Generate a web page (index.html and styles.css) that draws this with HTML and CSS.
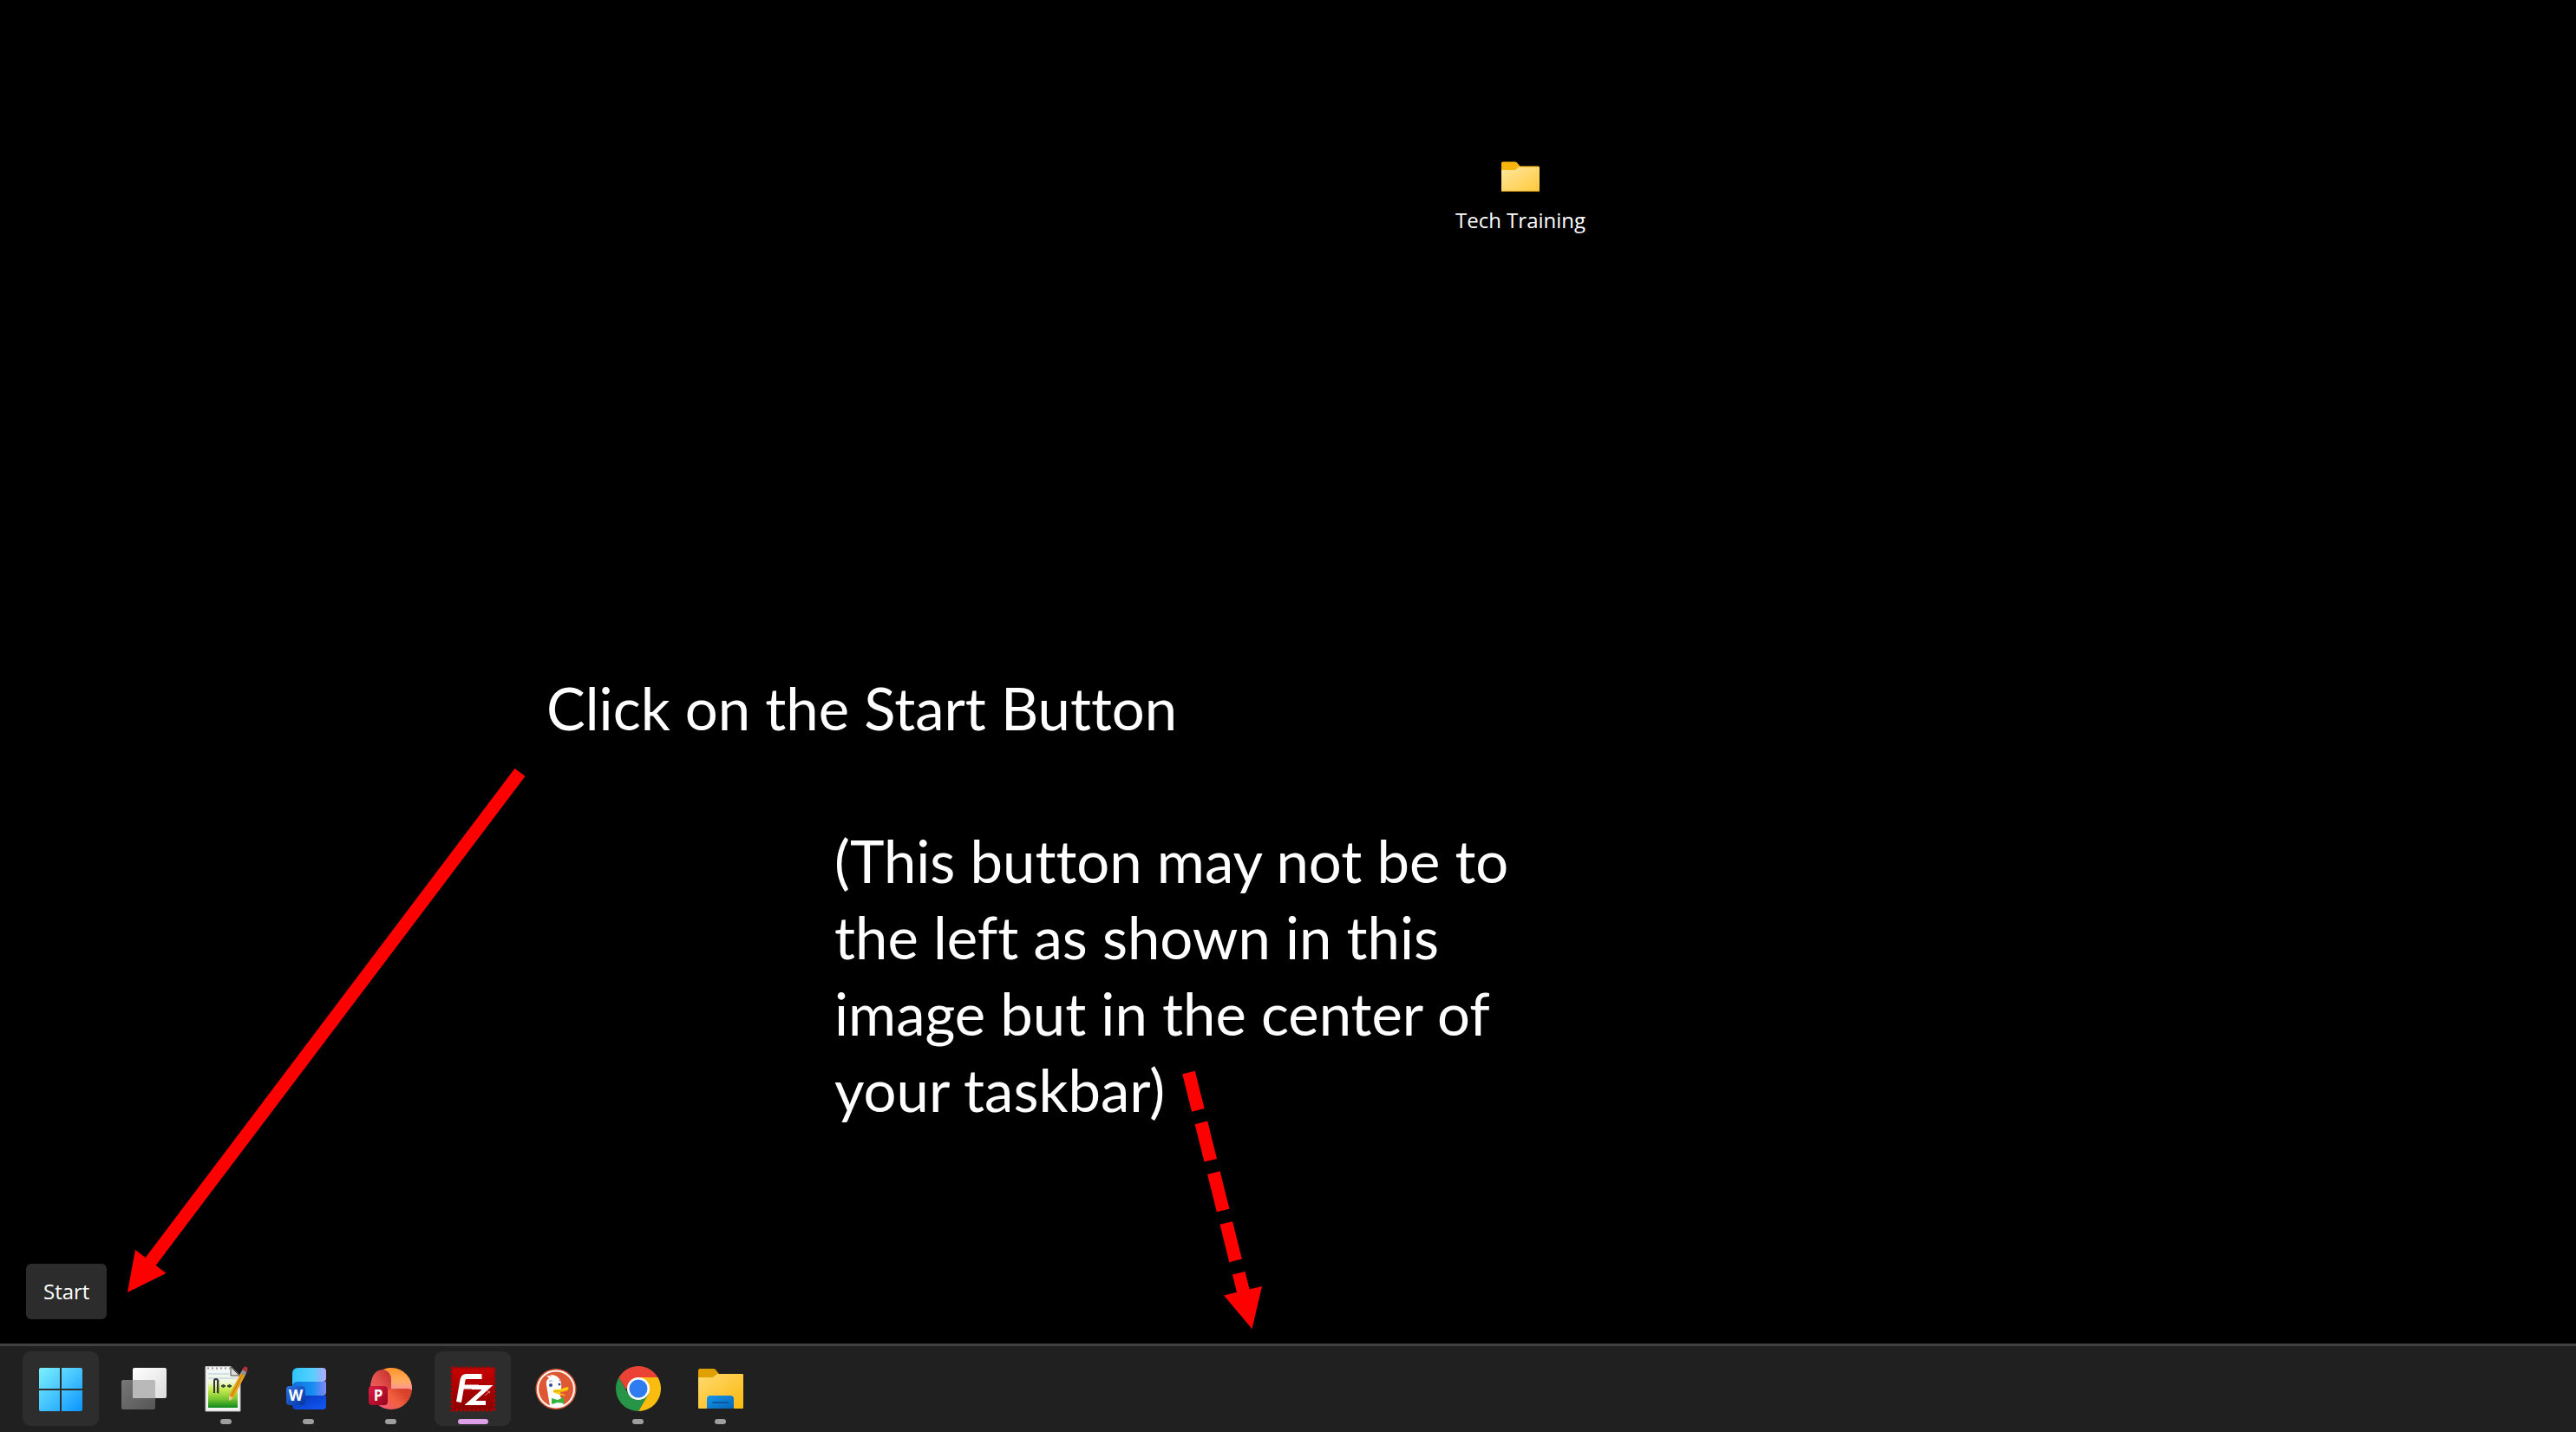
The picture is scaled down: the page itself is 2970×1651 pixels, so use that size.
FILE: index.html
```html
<!DOCTYPE html>
<html lang="en">
<head>
  <meta charset="UTF-8" />
  <title>Start Button</title>
  <link rel="stylesheet" href="styles.css">
</head>
<body>

  <!-- Desktop -->
  <main class="desktop">
    <button class="shortcut" type="button">
      <svg class="shortcut-icon" viewBox="0 0 46 36" aria-hidden="true">
        <defs>
          <linearGradient id="folderFront" x1="0" y1="0" x2="1" y2="1">
            <stop offset="0" stop-color="#ffe8a0" />
            <stop offset="1" stop-color="#ffc83a" />
          </linearGradient>
        </defs>
        <path d="M1 2q0-1.500 1.500-1.500h14q1.500 0 2.500 1l3.500 4h21q1.500 0 1.500 1.500v20H1z" fill="#f9b50e" />
        <path d="M1 10h16l4-3.500h22.500q1.500 0 1.500 1.500v25.500q0 1.500-1.500 1.500h-41Q1 35 1 33.500z" fill="url(#folderFront)" />
        <path d="M1.500 34.500h43" stroke="#c99016" />
      </svg>
      <span>Tech Training</span>
    </button>

    <p class="note note-start">Click on the Start Button</p>
    <p class="note note-center">(This button may not be to<br>
      the left as shown in this<br>
      image but in the center of<br>
      your taskbar)</p>

    <!-- Arrows -->
    <svg class="arrows" aria-hidden="true">
      <path class="shaft" d="M599.500 890.500L171 1458" />
      <path class="head" d="M147 1490l9-49 35.500 27z" />
      <path class="shaft dashed" d="M1370.500 1236.500L1434 1491" />
      <path class="head" d="M1443.500 1532l-32.500-38.500 44-10.500z" />
    </svg>

    <div class="tooltip" id="startTip" role="tooltip">Start</div>
  </main>

  <!-- Taskbar -->
  <nav class="taskbar" aria-label="Taskbar">
    <button class="task active" type="button" aria-label="Start" aria-describedby="startTip">
      <svg viewBox="0 0 52 52">
        <defs>
          <linearGradient id="win" gradientUnits="userSpaceOnUse" x1="1" y1="2" x2="51" y2="52">
            <stop offset="0" stop-color="#7cf0ff" />
            <stop offset=".5" stop-color="#46c4ff" />
            <stop offset="1" stop-color="#0a94ff" />
          </linearGradient>
        </defs>
        <g fill="url(#win)">
          <path d="M3 2h22v24H1V4q0-2 2-2z" />
          <path d="M27 2h22q2 0 2 2v22H27z" />
          <path d="M1 28h24v24H3q-2 0-2-2z" />
          <path d="M27 28h24v22q0 2-2 2H27z" />
        </g>
      </svg>
    </button>

    <button class="task" type="button" aria-label="Task View">
      <svg viewBox="0 0 52 52">
        <defs>
          <linearGradient id="pane" x1="0" y1="0" x2="1" y2="1">
            <stop offset="0" stop-color="#fff" />
            <stop offset="1" stop-color="#dcdcdc" />
          </linearGradient>
          <linearGradient id="paneDark" x1="0" y1="0" x2="1" y2="1">
            <stop offset="0" stop-color="#777" />
            <stop offset="1" stop-color="#565656" />
          </linearGradient>
        </defs>
        <rect x="1" y="16" width="39" height="34" rx="2" fill="url(#paneDark)" />
        <rect x="14" y="2" width="39" height="35" rx="2" fill="url(#pane)" />
        <path d="M14 16h24q2 0 2 2v19H16q-2 0-2-2z" fill="#b9b9b9" />
      </svg>
    </button>

    <button class="task" type="button" aria-label="Notepad++">
      <svg viewBox="0 0 52 52">
        <defs>
          <linearGradient id="npp" x1="0" y1="0" x2="0" y2="1">
            <stop offset="0" stop-color="#f2f7f8" />
            <stop offset=".3" stop-color="#f0f8d8" />
            <stop offset=".5" stop-color="#c8ec50" />
            <stop offset=".75" stop-color="#7cc832" />
            <stop offset="1" stop-color="#0c8a1c" />
          </linearGradient>
        </defs>
        <path d="M3 .500h29l11 11V52H3z" fill="#f4f4f4" stroke="#bbb" />
        <path d="M6 6h25l9 8v34H6z" fill="url(#npp)" />
        <path d="M6 9h24M6 14h33" stroke="#d3dfe6" stroke-width="2" />
        <path d="M5 2.500h26" stroke="#999" stroke-width="2" stroke-dasharray="2 3" />
        <path d="M32 1v10h10z" fill="#ddd" stroke="#444" />
        <path d="M13 31V17q0-2 2-2t2 2v14" fill="none" stroke="#333" stroke-width="2" />
        <path d="M18 16v16" stroke="#555" />
        <path d="M21 23h5M23.500 21v4M28 23h5M30.500 21v4" stroke="#3c4a2c" stroke-width="2" />
        <path d="M30 40l0-6 14-27 5 3-14 27z" fill="#e9a21b" />
        <path d="M32.500 35L46 9" stroke="#b87508" />
        <path d="M30 40v-6l5 3z" fill="#eec89a" />
        <path d="M43.500 8l2-4 5 3-2 4z" fill="#8c96a2" />
        <path d="M45.500 4q2-5 5-3 2 2 0 6z" fill="#b5323a" />
      </svg>
      <span class="running"></span>
    </button>

    <button class="task" type="button" aria-label="Word">
      <svg viewBox="0 0 52 52">
        <defs>
          <linearGradient id="wordTop" x1="0" y1="0" x2="1" y2="0">
            <stop offset="0" stop-color="#30c5ff" />
            <stop offset=".6" stop-color="#55d0fd" />
            <stop offset="1" stop-color="#b4a9fb" />
          </linearGradient>
          <linearGradient id="wordMid" x1="0" y1="0" x2="1" y2="0">
            <stop offset="0" stop-color="#0f70dc" />
            <stop offset=".6" stop-color="#168df0" />
            <stop offset="1" stop-color="#8388f5" />
          </linearGradient>
          <linearGradient id="wordLow" x1="0" y1="0" x2="1" y2="1">
            <stop offset="0" stop-color="#0736b4" />
            <stop offset="1" stop-color="#1259fa" />
          </linearGradient>
          <linearGradient id="wordBadge" x1="0" y1="0" x2="1" y2="1">
            <stop offset="0" stop-color="#2b72e4" />
            <stop offset="1" stop-color="#07349d" />
          </linearGradient>
        </defs>
        <path d="M8 34h39v12q0 4-4 4H13q-5 0-5-5z" fill="url(#wordLow)" />
        <path d="M8 18h39v12q0 4-4 4H14q-6 0-6 6z" fill="url(#wordMid)" />
        <path d="M8 9q0-7 7-7h28q4 0 4 4v8q0 4-4 4H14q-6 0-6 6z" fill="url(#wordTop)" />
        <rect x="1" y="23" width="22" height="22" rx="4" fill="url(#wordBadge)" />
        <text class="badge-letter" x="12" y="40">W</text>
      </svg>
      <span class="running"></span>
    </button>

    <button class="task" type="button" aria-label="PowerPoint">
      <svg viewBox="0 0 52 52">
        <defs>
          <linearGradient id="pptRight" x1="0" y1="0" x2="0" y2="1">
            <stop offset="0" stop-color="#ff962a" />
            <stop offset=".6" stop-color="#ffab60" />
            <stop offset="1" stop-color="#ff8f9c" />
          </linearGradient>
          <linearGradient id="pptLeft" x1="1" y1="0" x2="0" y2="1">
            <stop offset="0" stop-color="#bf2b2e" />
            <stop offset=".5" stop-color="#e4534b" />
            <stop offset="1" stop-color="#f45f78" />
          </linearGradient>
          <linearGradient id="pptLow" x1="1" y1="0" x2="0" y2="1">
            <stop offset="0" stop-color="#c93728" />
            <stop offset=".4" stop-color="#d8432c" />
            <stop offset=".6" stop-color="#f2613e" />
            <stop offset="1" stop-color="#f453a0" />
          </linearGradient>
          <linearGradient id="pptBadge" x1="0" y1="0" x2="1" y2="1">
            <stop offset="0" stop-color="#e21b43" />
            <stop offset="1" stop-color="#93061d" />
          </linearGradient>
        </defs>
        <circle cx="27" cy="26" r="24" fill="url(#pptLow)" />
        <path d="M15 6Q20 2 27 2a24 24 0 0 1 24 26q-1-2-5-2H27z" fill="url(#pptRight)" />
        <path d="M3 28Q3 4 18 4q9 2 9 12v10Q14 28 9 42 3 36 3 28z" fill="url(#pptLeft)" />
        <rect x="1" y="23" width="22" height="22" rx="4" fill="url(#pptBadge)" />
        <text class="badge-letter" x="12" y="40">P</text>
      </svg>
      <span class="running"></span>
    </button>

    <button class="task active" type="button" aria-label="FileZilla">
      <svg viewBox="0 0 52 52">
        <defs>
          <linearGradient id="fz" x1="0" y1="0" x2="0" y2="1">
            <stop offset="0" stop-color="#c80000" />
            <stop offset="1" stop-color="#8c0000" />
          </linearGradient>
        </defs>
        <rect x="2" y="2" width="49" height="49" fill="url(#fz)" />
        <rect x="2" y="2" width="49" height="49" fill="none" stroke="#a80303" stroke-width="3" stroke-dasharray="3 2" />
        <g fill="none" stroke="#fff" stroke-width="6">
          <path d="M36.500 12H18.500q-3 0-4 4L10 41.500" />
          <path d="M13 24h20" stroke-width="5" />
          <path d="M25 24.500h18L23 42.500h18" stroke-width="5" />
        </g>
        <path d="M40 34l6-5M42 28l4 3" stroke="#e58e8e" stroke-width="1" />
      </svg>
      <span class="running focused"></span>
    </button>

    <button class="task" type="button" aria-label="DuckDuckGo">
      <svg viewBox="0 0 52 52">
        <circle cx="27" cy="26.500" r="23.500" fill="#de5833" />
        <circle cx="27" cy="26.500" r="21" fill="none" stroke="#fff" stroke-width="2" />
        <path d="M20 46L16 22q-1-6 3-8l-3-3q4 0 6 1l-2-2q8 0 11 5 3 4 2 11l-2 6 5 13q-9 5-14 1z" fill="#fff" />
        <circle cx="21" cy="22" r="2" fill="#2d4f8e" />
        <circle cx="31" cy="21" r="1.500" fill="#2d4f8e" />
        <path d="M19 18q2-2 4-1M30 17q1-1 3-1" fill="none" stroke="#8aa5d4" />
        <path d="M40 24l-9 3q-8-1-7 3 5 3 14 4 1-1-8-3l10-3q3-3 0-4z" fill="#fdd20a" />
        <path d="M24 29h12" stroke="#d99a0b" />
        <path d="M22 37l7 2 7-3v7l-7-1-7 2z" fill="#35b53b" />
      </svg>
    </button>

    <button class="task" type="button" aria-label="Google Chrome">
      <svg viewBox="0 0 52 52">
        <path d="M27 13h22.500A26 26 0 0 1 27 52l11.300-19.500z" fill="#fbbc10" />
        <path d="M4.500 13A26 26 0 0 0 27 52l11.300-19.500H15.700z" fill="#279447" />
        <path d="M27 26H12L4.500 13a26 26 0 0 1 45 0H27z" fill="#ea4335" />
        <circle cx="27" cy="26" r="13" fill="#fff" />
        <circle cx="27" cy="26" r="10.500" fill="#2f7cf0" />
      </svg>
      <span class="running"></span>
    </button>

    <button class="task" type="button" aria-label="File Explorer">
      <svg viewBox="0 0 52 52">
        <defs>
          <linearGradient id="explorer" x1="0" y1="0" x2="1" y2="1">
            <stop offset="0" stop-color="#ffd970" />
            <stop offset="1" stop-color="#fbb90d" />
          </linearGradient>
          <linearGradient id="dock" x1="0" y1="0" x2="1" y2="1">
            <stop offset="0" stop-color="#1597ea" />
            <stop offset="1" stop-color="#0765b8" />
          </linearGradient>
        </defs>
        <path d="M1 5q0-2 2-2h15q2 0 3 1l4 5v10H1z" fill="#dfa000" />
        <path d="M1 13h17l5-4h29q1 0 1 1v38q0 1-1 1H2q-1 0-1-1z" fill="url(#explorer)" />
        <path d="M11 49V38q0-4 4-4h23q4 0 4 4v11z" fill="url(#dock)" />
        <path d="M18 42h17" stroke="#0a5a9c" stroke-width="2" stroke-linecap="round" />
      </svg>
      <span class="running"></span>
    </button>
  </nav>

</body>
</html>
```

FILE: styles.css
```css
body {
  margin: 0;
  min-height: 100vh;
  display: flex;
  flex-direction: column;
  background: #000;
  color: #fff;
  font-family: "Open Sans", "Noto Sans", sans-serif;
  overflow: hidden;
}

button {
  border: none;
  background: transparent;
  color: inherit;
  font: inherit;
  cursor: pointer;
}

.desktop {
  position: relative;
  flex: 1;
}

/* Desktop icon */
.shortcut {
  position: absolute;
  top: 186px;
  left: 1653px;
  width: 200px;
  padding: 0;
  display: flex;
  flex-direction: column;
  align-items: center;
  gap: 14px;
  font-size: 24px;
  line-height: 36px;
  white-space: nowrap;
}

.shortcut-icon {
  width: 46px;
  height: 36px;
}

/* Instructions */
.note {
  position: absolute;
  margin: 0;
  font-family: Lato, sans-serif;
  font-size: 67px;
  line-height: 88px;
  font-variant-ligatures: none;
  white-space: nowrap;
}

.note-start {
  top: 772px;
  left: 630px;
}

.note-center {
  top: 948px;
  left: 962px;
}

.arrows {
  position: absolute;
  top: 0;
  left: 0;
  width: 100%;
  height: 100%;
  pointer-events: none;
}

.shaft {
  fill: none;
  stroke: #f00;
  stroke-width: 15;
}

.dashed {
  stroke-dasharray: 44.7 14.9;
}

.head {
  fill: #f00;
}

.tooltip {
  position: absolute;
  left: 30px;
  bottom: 28px;
  padding: 14px 20px;
  border-radius: 6px;
  background: #2c2c2c;
  font-size: 24px;
  font-weight: 500;
  line-height: 36px;
}

/* Taskbar */
.taskbar {
  display: flex;
  gap: 7px;
  padding: 6px 26px 7px;
  border-top: 3px solid #404040;
  background: #202020;
}

.task {
  box-sizing: border-box;
  width: 88px;
  height: 86px;
  padding: 17px 0 0;
  display: flex;
  flex-direction: column;
  align-items: center;
  gap: 9px;
  border-radius: 9px;
}

.task svg {
  width: 52px;
  height: 52px;
  overflow: visible;
}

.task:hover,
.task.active {
  background: #2d2d2d;
}

.running {
  width: 13px;
  height: 6px;
  border-radius: 3px;
  background: #9e9e9e;
}

.running.focused {
  width: 35px;
  background: #df9fe8;
}

.badge-letter {
  fill: #fff;
  font-size: 17px;
  font-weight: 700;
  text-anchor: middle;
}
```
